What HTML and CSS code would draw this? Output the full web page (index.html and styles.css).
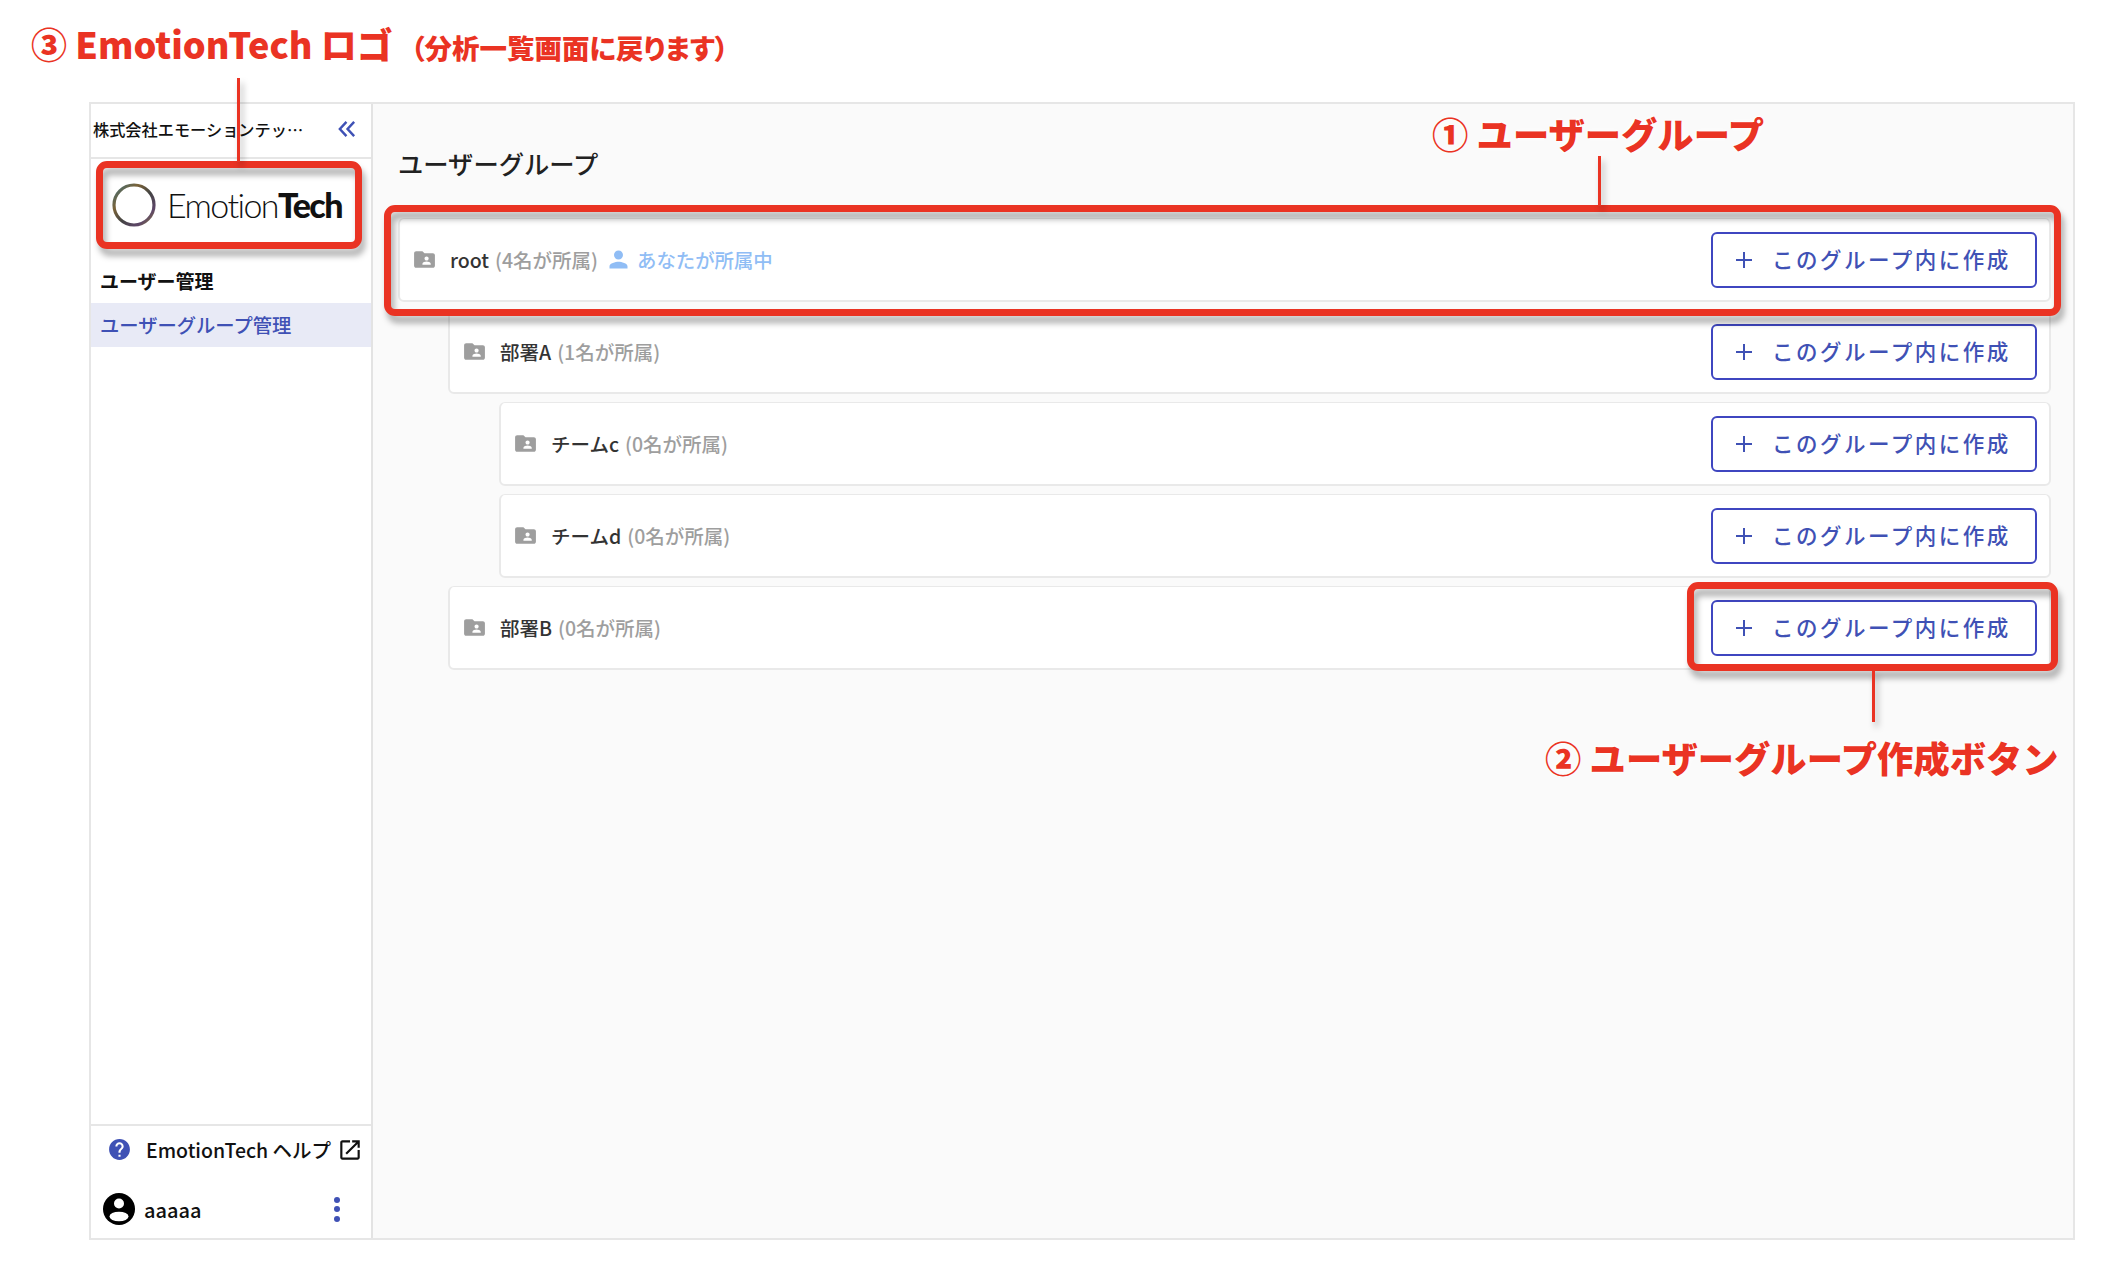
FILE: index.html
```html
<!DOCTYPE html>
<html lang="ja">
<head>
<meta charset="utf-8">
<title>ユーザーグループ</title>
<link rel="stylesheet" href="styles.css">
</head>
<body>
<div class="app">
  <aside class="sidebar">
    <div class="org">
      <span class="org-name">株式会社エモーションテッ…</span>
      <svg class="collapse" viewBox="0 0 20 20"><path d="M9.500 3.500 3.500 10l6 6.500M16.500 3.500l-6 6.500 6 6.500"/></svg>
    </div>
    <div class="logo">
      <svg class="ring" viewBox="0 0 44 44">
        <defs><linearGradient id="rg" x1="0" y1="0" x2="1" y2="1">
          <stop offset="0" stop-color="#3f6f78"/><stop offset=".3" stop-color="#7a6238"/><stop offset=".55" stop-color="#444"/><stop offset=".8" stop-color="#5d4668"/><stop offset="1" stop-color="#8a7a3a"/>
        </linearGradient></defs>
        <circle cx="22" cy="22" r="20" fill="none" stroke="url(#rg)" stroke-width="3.200"/>
      </svg>
      <span class="logo-text"><span class="logo-light">Emotion</span><span class="logo-bold">Tech</span></span>
    </div>
    <nav class="nav">
      <div class="nav-title">ユーザー管理</div>
      <div class="nav-item">ユーザーグループ管理</div>
    </nav>
    <div class="side-foot">
      <div class="help">
        <svg class="help-icon" viewBox="0 0 24 24"><path d="M12 2C6.480 2 2 6.480 2 12s4.480 10 10 10 10-4.480 10-10S17.520 2 12 2zm1 17h-2v-2h2v2zm2.070-7.750-.9.92C13.450 12.900 13 13.500 13 15h-2v-.5c0-1.100.45-2.100 1.170-2.830l1.240-1.260c.37-.36.59-.86.59-1.410 0-1.100-.9-2-2-2s-2 .9-2 2H8c0-2.210 1.790-4 4-4s4 1.790 4 4c0 .88-.36 1.680-.93 2.250z"/></svg>
        <span class="help-text">EmotionTech ヘルプ</span>
        <svg class="ext-icon" viewBox="0 0 24 24"><path d="M19 19H5V5h7V3H5c-1.110 0-2 .9-2 2v14c0 1.100.89 2 2 2h14c1.100 0 2-.9 2-2v-7h-2v7zM14 3v2h3.590l-9.830 9.830 1.410 1.410L19 6.410V10h2V3h-7z"/></svg>
      </div>
      <div class="user">
        <svg class="user-icon" viewBox="0 0 32 32"><circle class="u-disc" cx="16" cy="16" r="16"/><circle class="u-cut" cx="16" cy="10.500" r="5"/><ellipse class="u-cut" cx="16" cy="23.500" rx="9.500" ry="4.800"/></svg>
        <span class="user-name">aaaaa</span>
        <span class="dots"><i></i><i></i><i></i></span>
      </div>
    </div>
  </aside>
  <main class="main">
    <h1 class="title">ユーザーグループ</h1>
    <div class="tree">
      <div class="card">
        <svg class="folder" viewBox="0 0 24 24"><use href="#folder"/></svg>
        <span class="name">root</span><span class="count">(4名が所属)</span>
        <svg class="me-icon" viewBox="0 0 24 24"><path d="M12 12c2.210 0 4-1.790 4-4s-1.790-4-4-4-4 1.790-4 4 1.790 4 4 4zm0 2c-2.670 0-8 1.340-8 4v2h16v-2c0-2.660-5.330-4-8-4z"/></svg>
        <span class="me">あなたが所属中</span>
        <button class="add"><svg class="plus" viewBox="0 0 20 20"><path d="M10 2v16M2 10h16"/></svg>このグループ内に作成</button>
      </div>
      <div class="branch">
        <div class="card">
          <svg class="folder" viewBox="0 0 24 24"><use href="#folder"/></svg>
          <span class="name">部署A</span><span class="count">(1名が所属)</span>
          <button class="add"><svg class="plus" viewBox="0 0 20 20"><path d="M10 2v16M2 10h16"/></svg>このグループ内に作成</button>
        </div>
        <div class="branch">
          <div class="card">
            <svg class="folder" viewBox="0 0 24 24"><use href="#folder"/></svg>
            <span class="name">チームc</span><span class="count">(0名が所属)</span>
            <button class="add"><svg class="plus" viewBox="0 0 20 20"><path d="M10 2v16M2 10h16"/></svg>このグループ内に作成</button>
          </div>
          <div class="card">
            <svg class="folder" viewBox="0 0 24 24"><use href="#folder"/></svg>
            <span class="name">チームd</span><span class="count">(0名が所属)</span>
            <button class="add"><svg class="plus" viewBox="0 0 20 20"><path d="M10 2v16M2 10h16"/></svg>このグループ内に作成</button>
          </div>
        </div>
        <div class="card">
          <svg class="folder" viewBox="0 0 24 24"><use href="#folder"/></svg>
          <span class="name">部署B</span><span class="count">(0名が所属)</span>
          <button class="add"><svg class="plus" viewBox="0 0 20 20"><path d="M10 2v16M2 10h16"/></svg>このグループ内に作成</button>
        </div>
      </div>
    </div>
  </main>
</div>
<svg class="defs" width="0" height="0"><defs><path id="folder" d="M20 6h-8l-2-2H4c-1.100 0-1.990.9-1.990 2L2 18c0 1.100.9 2 2 2h16c1.100 0 2-.9 2-2V8c0-1.100-.9-2-2-2zm-6 3c1.100 0 2 .9 2 2s-.9 2-2 2-2-.9-2-2 .9-2 2-2zm4 8h-8v-1c0-1.330 2.670-2 4-2s4 .67 4 2v1z"/></defs></svg>

<div class="mark box-logo"></div>
<div class="mark box-root"></div>
<div class="mark box-btn"></div>
<div class="wire wire-logo"></div>
<div class="wire wire-root"></div>
<div class="wire wire-btn"></div>
<div class="note note-logo">③ EmotionTech ロゴ<span class="note-sub">（分析一覧画面に戻ります）</span></div>
<div class="note note-root">① ユーザーグループ</div>
<div class="note note-btn">② ユーザーグループ作成ボタン</div>
</body>
</html>
```
FILE: styles.css
```css
* { box-sizing: border-box; }
html, body { margin: 0; padding: 0; background: #fff; }
body {
  width: 2108px;
  height: 1276px;
  overflow: hidden;
  position: relative;
  padding: 102px 33px 36px 89px;
  font-family: "Noto Sans CJK JP", "Noto Sans", sans-serif;
  color: #212121;
}
.defs { position: absolute; }
.app {
  display: flex;
  height: 1138px;
  border: 2px solid #e6e6e6;
  background: #fafafa;
}
.sidebar {
  width: 282px;
  flex: none;
  display: flex;
  flex-direction: column;
  background: #fff;
  border-right: 2px solid #e3e3e3;
}
.org {
  height: 55px;
  flex: none;
  display: flex;
  align-items: center;
  justify-content: space-between;
  padding: 0 13px 3px 2px;
  border-bottom: 2px solid #e6e6e6;
}
.org-name { font-size: 16.200px; font-weight: 500; color: #111; white-space: nowrap; }
.collapse { width: 22px; height: 22px; fill: none; stroke: #3f51b5; stroke-width: 2.200; }
.logo {
  height: 93px;
  flex: none;
  display: flex;
  align-items: center;
  gap: 11px;
  padding: 0 0 2px 21px;
}
.ring { width: 44px; height: 44px; flex: none; }
.logo-text { font-family: "Lato", sans-serif; font-size: 34px; letter-spacing: -1.600px; color: #111; white-space: nowrap; line-height: 1; }
.logo-light { font-weight: 300; }
.logo-bold { font-weight: 900; }
.nav { flex: 1; }
.nav-title { height: 51px; padding: 15px 0 0 9px; font-size: 19px; line-height: 28px; font-weight: 700; color: #111; }
.nav-item { height: 44px; display: flex; align-items: center; padding-left: 9px; font-size: 19.300px; font-weight: 500; color: #3f51b5; background: #e8eaf6; }
.side-foot { border-top: 2px solid #e6e6e6; height: 114px; flex: none; }
.help { display: flex; align-items: center; height: 47px; padding-left: 16px; }
.help-icon { width: 25px; height: 25px; fill: #3f51b5; flex: none; }
.help-text { margin-left: 14px; font-size: 19.500px; font-weight: 500; color: #111; white-space: nowrap; }
.ext-icon { width: 26px; height: 26px; margin-left: 6px; fill: #111; flex: none; }
.user { display: flex; align-items: center; height: 38px; margin-top: 17px; padding-left: 12px; }
.user-icon { width: 32px; height: 32px; flex: none; }
.u-disc { fill: #000; }
.u-cut { fill: #fff; }
.user-name { margin-left: 9px; font-size: 20px; font-weight: 500; color: #111; }
.dots { margin-left: auto; margin-right: 31px; display: flex; flex-direction: column; gap: 3.500px; }
.dots i { display: block; width: 6px; height: 6px; border-radius: 50%; background: #3f51b5; }

.main { flex: 1; padding: 0 22px 0 25px; min-width: 0; }
.title { margin: 0; height: 114px; padding-top: 37px; font-size: 25.300px; line-height: 44px; font-weight: 500; color: #212121; }
.tree { display: flex; flex-direction: column; gap: 8px; }
.branch { display: flex; flex-direction: column; gap: 8px; margin-left: 50px; }
.branch .branch { margin-left: 51px; }
.card {
  height: 84px;
  display: flex;
  align-items: center;
  padding: 0 12px 0 12px;
  background: #fff;
  border: 2px solid #e9e9e9;
  border-top-width: 1px;
  border-radius: 6px;
}
.folder { width: 25px; height: 25px; fill: #9e9e9e; flex: none; }
.name { margin-left: 13px; font-size: 19.500px; font-weight: 500; color: #333; white-space: nowrap; }
.count { margin-left: 6px; font-size: 19.500px; font-weight: 500; color: #9e9e9e; white-space: nowrap; }
.me-icon { width: 27px; height: 27px; margin-left: 7px; fill: #90bdf5; flex: none; }
.me { margin-left: 5px; font-size: 19.400px; font-weight: 500; color: #90bdf5; white-space: nowrap; }
.add {
  margin-left: auto;
  width: 326px;
  height: 56px;
  display: flex;
  align-items: center;
  padding: 0 0 2px 21px;
  background: #fff;
  border: 2px solid #3f46c0;
  border-radius: 6px;
  font-family: inherit;
  font-size: 21.500px;
  font-weight: 500;
  letter-spacing: 2.500px;
  color: #3f51b5;
  white-space: nowrap;
}
.plus { width: 20px; height: 20px; margin: 2px 18px 0 0; fill: none; stroke: #3f51b5; stroke-width: 2; flex: none; }

.mark {
  position: absolute;
  border: 7px solid #ea3323;
  border-radius: 11px;
  filter: drop-shadow(3px 7px 3px rgba(0, 0, 0, .32));
}
.box-logo { left: 96px; top: 161px; width: 266px; height: 88px; }
.box-root { left: 384px; top: 205px; width: 1677px; height: 111px; }
.box-btn { left: 1687px; top: 582px; width: 371px; height: 89px; }
.wire { position: absolute; width: 3px; background: #ea3323; filter: drop-shadow(3px 5px 3px rgba(0, 0, 0, .28)); }
.wire-logo { left: 237px; top: 78px; height: 84px; }
.wire-root { left: 1598px; top: 156px; height: 50px; }
.wire-btn { left: 1872px; top: 671px; height: 51px; }
.note {
  position: absolute;
  line-height: 50px;
  font-weight: 900;
  color: #ea3323;
  white-space: nowrap;
  text-shadow: 0 0 3px #fff, 0 0 6px #fff;
}
.note-logo { left: 31px; top: 18px; font-size: 36px; }
.note-sub { margin-left: 18px; font-size: 27.500px; font-weight: 900; font-feature-settings: "palt"; }
.note-root { left: 1432px; top: 108px; font-size: 36.300px; }
.note-btn { left: 1545px; top: 732px; font-size: 36.300px; }
```
